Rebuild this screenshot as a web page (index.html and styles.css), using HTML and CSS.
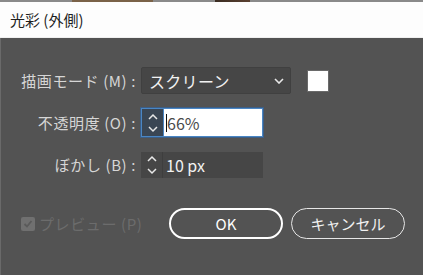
FILE: index.html
```html
<!DOCTYPE html>
<html lang="ja">
<head>
    <meta charset="UTF-8">
    <title>光彩 (外側)</title>
    <link rel="stylesheet" href="styles.css">
</head>
<body>
    <div class="top-strip"></div>
    <div class="titlebar">光彩 (外側)</div>

    <div class="dialog">
        <div class="form">
            <label class="label">描画モード (M) :</label>
            <div class="control">
                <div class="select">
                    <span>スクリーン</span>
                    <svg class="chevron" width="10" height="6" viewBox="0 0 10 6"><path d="M1 1l4 4 4-4" fill="none" stroke="#e8e8e8" stroke-width="1.6"/></svg>
                </div>
                <div class="swatch"></div>
            </div>

            <label class="label">不透明度 (O) :</label>
            <div class="control">
                <div class="number focused">
                    <div class="spin">
                        <svg width="12" height="22" viewBox="0 0 12 22"><path d="M2 7l4-4 4 4M2 15l4 4 4-4" fill="none" stroke="#e8e8e8" stroke-width="1.5"/></svg>
                    </div>
                    <div class="value"><span class="caret"></span>66%</div>
                </div>
            </div>

            <label class="label">ぼかし (B) :</label>
            <div class="control">
                <div class="number">
                    <div class="spin">
                        <svg width="12" height="22" viewBox="0 0 12 22"><path d="M2 7l4-4 4 4M2 15l4 4 4-4" fill="none" stroke="#e8e8e8" stroke-width="1.5"/></svg>
                    </div>
                    <div class="value">10 px</div>
                </div>
            </div>
        </div>

        <div class="footer">
            <div class="preview">
                <span class="check">
                    <svg width="10" height="10" viewBox="0 0 10 10"><path d="M1.5 5l2.5 2.5 4.5-5.5" fill="none" stroke="#5a5a5a" stroke-width="1.8"/></svg>
                </span>
                プレビュー (P)
            </div>
            <button class="btn primary">OK</button>
            <button class="btn">キャンセル</button>
        </div>
    </div>
</body>
</html>
```

FILE: styles.css
```css
* {
    margin: 0;
    padding: 0;
    box-sizing: border-box;
}

body {
    font-family: "Noto Sans CJK JP", "Noto Sans", sans-serif;
    background: #535353;
    width: 423px;
    height: 275px;
    overflow: hidden;
}

.top-strip {
    height: 2px;
    background: linear-gradient(90deg, #8a8a8a 0, #8a8a8a 72px, #7a6248 72px, #7a6248 153px, #8a8a8a 153px, #8a8a8a 215px, #3a2c22 215px, #5a4030 250px, #8a8a8a 250px);
}

.titlebar {
    height: 36px;
    background: #fdfdfd;
    color: #1e1e1e;
    font-size: 15px;
    line-height: 36px;
    padding-left: 10px;
    border-bottom: 1px solid #f0f0f0;
}

.dialog {
    height: 237px;
    border-left: 1px solid #6a6a6a;
    padding-top: 29px;
}

.form {
    display: grid;
    grid-template-columns: 135px auto;
    column-gap: 5px;
    row-gap: 15px;
    align-items: center;
}

.label {
    text-align: right;
    color: #d6d6d6;
    font-size: 15px;
    letter-spacing: 0.6px;
    line-height: 27px;
}

.control {
    display: flex;
    align-items: center;
    height: 27px;
}

.select {
    width: 150px;
    height: 27px;
    background: #464646;
    border: 1px solid #404040;
    border-radius: 2px;
    color: #f2f2f2;
    font-size: 16px;
    letter-spacing: 0.3px;
    display: flex;
    align-items: center;
    justify-content: space-between;
    padding: 0 6px 0 7px;
}

.swatch {
    width: 22px;
    height: 22px;
    background: #ffffff;
    margin-left: 16px;
    border: 1px solid #6a6a6a;
}

.number {
    display: flex;
    height: 26px;
    width: 122px;
}

.spin {
    width: 22px;
    background: #464646;
    border-right: 1px solid #3e3e3e;
    display: flex;
    align-items: center;
    justify-content: center;
}

.value {
    flex: 1;
    background: #464646;
    color: #f2f2f2;
    font-size: 16px;
    line-height: 26px;
    padding-left: 3px;
    display: flex;
    align-items: center;
}

.number.focused {
    height: 29px;
    border: 1px solid #4a86c4;
    box-shadow: 0 0 0 1px #3c5e86;
}

.number.focused .spin {
    background: #3a4654;
    border-right: 1px solid #4a86c4;
}

.number.focused .value {
    background: #ffffff;
    color: #4a4a4a;
    padding-left: 2px;
}

.caret {
    width: 1px;
    height: 18px;
    background: #111;
}

.footer {
    display: flex;
    align-items: center;
    margin-top: 30px;
    padding-left: 20px;
}

.preview {
    display: flex;
    align-items: center;
    color: #6c6c6c;
    font-size: 15px;
    letter-spacing: 0.6px;
    width: 148px;
}

.check {
    width: 14px;
    height: 14px;
    background: #707070;
    border-radius: 2px;
    display: flex;
    align-items: center;
    justify-content: center;
    margin-right: 4px;
}

.btn {
    font-family: "Noto Sans CJK JP", "Noto Sans", sans-serif;
    width: 114px;
    height: 31px;
    border-radius: 16px;
    background: transparent;
    border: 1.5px solid #e6e6e6;
    color: #f0f0f0;
    font-size: 15px;
    margin-right: 8px;
}

.btn.primary {
    border: 2.5px solid #ffffff;
    color: #ffffff;
}
```
